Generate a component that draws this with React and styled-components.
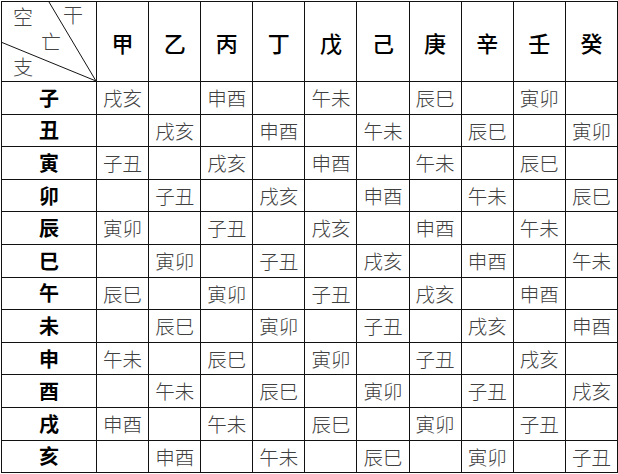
import styled, { createGlobalStyle } from 'styled-components'

const GlobalStyle = createGlobalStyle`
  body {
    margin: 0;
    background: #fff;
    font-family: "Noto Sans CJK SC", "Noto Sans", sans-serif;
  }
`

const gan = ['甲', '乙', '丙', '丁', '戊', '己', '庚', '辛', '壬', '癸']
const zhi = ['子', '丑', '寅', '卯', '辰', '巳', '午', '未', '申', '酉', '戌', '亥']
const pairs = ['戌亥', '', '子丑', '', '寅卯', '', '辰巳', '', '午未', '', '申酉', '']

const kongWang = (r, c) => {
  const d = (r - c + 12) % 12
  return pairs[d]
}

const Table = styled.table`
  border-collapse: collapse;
  table-layout: fixed;
  width: 617px;
  margin: 1px 0 0 1px;
  color: #000;
`

const Cell = styled.td`
  border: 1.4px solid #111;
  padding: 0;
  height: 31.6px;
  text-align: center;
  vertical-align: middle;
  font-size: 19.5px;
  line-height: 1;
  color: #404040;
  font-weight: 300;
`

const HeadCell = styled.th`
  border: 1.4px solid #111;
  padding: 0;
  height: 79px;
  text-align: center;
  vertical-align: middle;
  font-size: 22px;
  font-weight: 500;
  color: #000;
`

const RowLabel = styled(Cell)`
  font-size: 20px;
  font-weight: 700;
  color: #000;
`

const Corner = styled.th`
  border: 1.4px solid #111;
  padding: 0;
  height: 79px;
  position: relative;
  font-weight: 300;
`

const CornerLines = styled.svg`
  position: absolute;
  inset: 0;
  width: 100%;
  height: 100%;
`

const CornerText = styled.span`
  position: absolute;
  font-size: 20px;
  color: #444;
  font-weight: 300;
  line-height: 1;
  left: ${p => p.$x}px;
  top: ${p => p.$y}px;
`

const App = () => {
  return (
    <>
      <GlobalStyle />
      <Table>
        <colgroup>
          <col style={{ width: 95 }} />
          {gan.map(g => <col key={g} />)}
        </colgroup>
        <thead>
          <tr>
            <Corner>
              <CornerLines viewBox="0 0 94 80" preserveAspectRatio="none">
                <line x1="47" y1="0" x2="94" y2="80" stroke="#111" strokeWidth="1" />
                <line x1="0" y1="41" x2="94" y2="80" stroke="#111" strokeWidth="1" />
              </CornerLines>
              <CornerText $x={11} $y={5}>空</CornerText>
              <CornerText $x={61} $y={3}>干</CornerText>
              <CornerText $x={39} $y={30}>亡</CornerText>
              <CornerText $x={11} $y={55}>支</CornerText>
            </Corner>
            {gan.map(g => <HeadCell key={g}>{g}</HeadCell>)}
          </tr>
        </thead>
        <tbody>
          {zhi.map((z, r) => (
            <tr key={z}>
              <RowLabel>{z}</RowLabel>
              {gan.map((g, c) => (
                <Cell key={g}>{kongWang(r, c)}</Cell>
              ))}
            </tr>
          ))}
        </tbody>
      </Table>
    </>
  )
}

export default App
